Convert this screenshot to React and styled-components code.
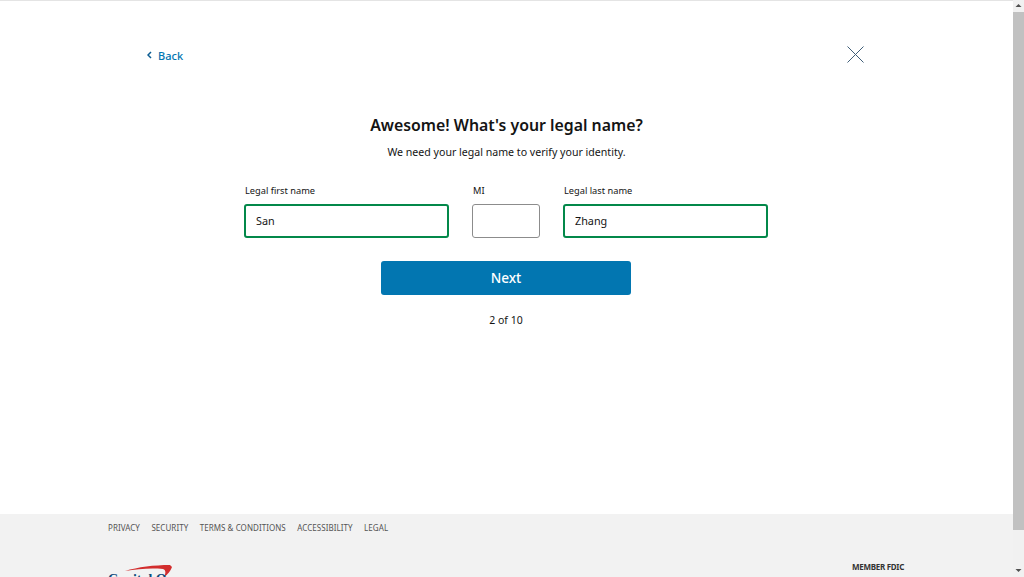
import React from "react";
import styled, { createGlobalStyle } from "styled-components";

const GlobalStyle = createGlobalStyle`
  html, body {
    margin: 0;
    padding: 0;
    height: 577px;
    overflow: hidden;
    background: #fff;
    font-family: "Noto Sans", "Open Sans", sans-serif;
    color: #141414;
  }
  * {
    box-sizing: border-box;
  }
`;

const Page = styled.div`
  display: flex;
  width: 1024px;
  height: 577px;
  overflow: hidden;
`;

const Content = styled.div`
  flex: 1;
  min-width: 0;
  display: flex;
  flex-direction: column;
  border-top: 1px solid #e4e4e4;
`;

const Main = styled.main`
  flex: 1;
  min-height: 0;
  background: #fff;
`;

const TopBar = styled.div`
  display: flex;
  justify-content: space-between;
  align-items: center;
  height: 37px;
  margin-top: 35px;
  padding: 0 149px 0 147px;
`;

const BackLink = styled.a`
  display: flex;
  align-items: center;
  gap: 6px;
  margin-top: 1px;
  font-size: 11px;
  font-weight: 500;
  color: #0276b1;
`;

const Intro = styled.div`
  margin-top: 40px;
  text-align: center;
`;

const Title = styled.h1`
  margin: 0;
  font-size: 15.85px;
  line-height: 24px;
  font-weight: 600;
  color: #141414;
`;

const Subtitle = styled.p`
  margin: 6px 0 0;
  font-size: 10.6px;
  line-height: 18px;
  color: #141414;
`;

const Fields = styled.div`
  display: flex;
  gap: 23px;
  margin: 23px 0 0 244px;
`;

const FieldGroup = styled.label`
  display: block;
  width: ${(p) => p.$width}px;
`;

const FieldLabel = styled.span`
  display: block;
  padding-left: 1px;
  font-size: 9.25px;
  line-height: 14px;
  margin-bottom: 6px;
  color: #141414;
`;

const TextInput = styled.input`
  display: block;
  width: 100%;
  height: 34px;
  padding: 0 9px 2px 10px;
  border: ${(p) => (p.$valid ? "2px solid #03884a" : "1px solid #8c8c8c")};
  border-radius: 3px;
  background: #fff;
  font-family: inherit;
  font-size: 10.8px;
  color: #141414;
  outline: none;
`;

const Actions = styled.div`
  display: flex;
  flex-direction: column;
  align-items: center;
  margin-top: 23px;
  padding-right: 1px;
`;

const NextButton = styled.button`
  width: 250px;
  height: 34px;
  padding: 0 0 2px;
  border: none;
  border-radius: 3px;
  background: #0276b1;
  color: #fff;
  font-family: inherit;
  font-size: 13.6px;
  font-weight: 500;
`;

const Progress = styled.div`
  margin-top: 16px;
  font-size: 10.5px;
  line-height: 18px;
  color: #141414;
`;

const Footer = styled.footer`
  height: 63px;
  flex-shrink: 0;
  overflow: hidden;
  background: #f2f2f2;
  padding: 0 108px;
`;

const FooterLinks = styled.nav`
  display: flex;
  gap: 11.5px;
  padding-top: 8px;
  font-size: 8px;
  letter-spacing: 0.05px;
  line-height: 12px;
  color: #555;
`;

const FooterBottom = styled.div`
  display: flex;
  justify-content: space-between;
  align-items: flex-start;
  padding-right: 1px;
  margin-top: 14px;
`;

const Logo = styled.svg`
  display: block;
  margin-top: 17px;
`;

const LogoText = styled.text`
  font-family: "Liberation Serif", serif;
  font-size: 14px;
  font-weight: 700;
  fill: #0f4a7c;
`;

const Fdic = styled.span`
  margin-top: 13px;
  font-size: 8px;
  line-height: 12px;
  font-weight: 700;
  color: #333;
  letter-spacing: -0.3px;
`;

const Scrollbar = styled.div`
  width: 11px;
  flex-shrink: 0;
  display: flex;
  flex-direction: column;
  background: #f1f1f1;
`;

const ScrollThumb = styled.div`
  height: 518px;
  margin-top: 3px;
  background: #c1c1c1;
`;

const ScrollArrow = styled.svg`
  display: block;
  margin: ${(p) => (p.$bottom ? "auto 0 3px" : "3px 0 0")};
`;

const links = ["PRIVACY", "SECURITY", "TERMS & CONDITIONS", "ACCESSIBILITY", "LEGAL"];

export default function App() {
  return (
    <Page>
      <GlobalStyle />
      <Content>
        <Main>
          <TopBar>
            <BackLink>
              <svg width="5" height="8" viewBox="0 0 5 8">
                <path d="M4 1 L1 4 L4 7" fill="none" stroke="#0b5c92" strokeWidth="1.5" />
              </svg>
              Back
            </BackLink>
            <svg width="17" height="17" viewBox="0 0 17 17">
              <path d="M0.5 0.5 L16.5 16.5 M16.5 0.5 L0.5 16.5" stroke="#3f5e78" strokeWidth="1" fill="none" />
            </svg>
          </TopBar>
          <Intro>
            <Title>Awesome! What's your legal name?</Title>
            <Subtitle>We need your legal name to verify your identity.</Subtitle>
          </Intro>
          <Fields>
            <FieldGroup $width={205}>
              <FieldLabel>Legal first name</FieldLabel>
              <TextInput $valid defaultValue="San" />
            </FieldGroup>
            <FieldGroup $width={68}>
              <FieldLabel>MI</FieldLabel>
              <TextInput />
            </FieldGroup>
            <FieldGroup $width={205}>
              <FieldLabel>Legal last name</FieldLabel>
              <TextInput $valid defaultValue="Zhang" />
            </FieldGroup>
          </Fields>
          <Actions>
            <NextButton>Next</NextButton>
            <Progress>2 of 10</Progress>
          </Actions>
        </Main>
        <Footer>
          <FooterLinks>
            {links.map((l) => (
              <span key={l}>{l}</span>
            ))}
          </FooterLinks>
          <FooterBottom>
            <Logo width="68" height="24" viewBox="0 0 68 24">
              <path d="M17 6 C30 2 46 0 62 0 L64 2 C62 7 60 9 56 12 C58 8 58 5 55 4 C42 3 30 4 17 6 Z" fill="#d22e2e" />
              <LogoText x="0" y="19">Capital One</LogoText>
            </Logo>
            <Fdic>MEMBER FDIC</Fdic>
          </FooterBottom>
        </Footer>
      </Content>
      <Scrollbar>
        <ScrollArrow width="11" height="6" viewBox="0 0 11 6">
          <path d="M5.5 1 L8.5 4 H2.5 Z" fill="#505050" />
        </ScrollArrow>
        <ScrollThumb />
        <ScrollArrow $bottom width="11" height="6" viewBox="0 0 11 6">
          <path d="M2.5 1 H8.5 L5.5 4 Z" fill="#505050" />
        </ScrollArrow>
      </Scrollbar>
    </Page>
  );
}
